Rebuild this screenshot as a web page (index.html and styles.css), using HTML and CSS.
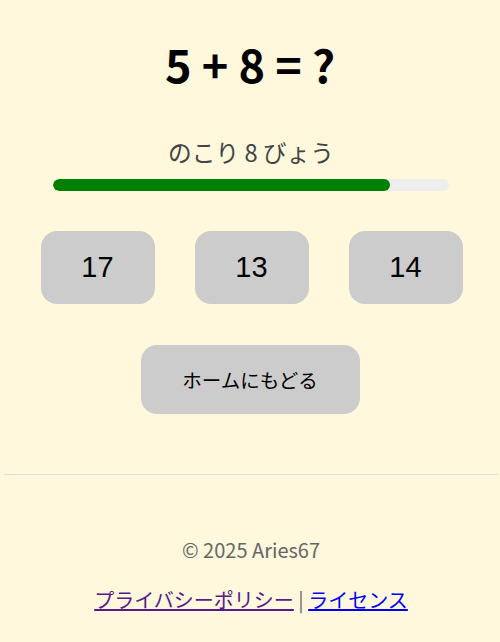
FILE: index.html
```html
<!DOCTYPE html>
<html lang="ja">
<head>
<meta charset="utf-8">
<title>けいさん</title>
<link rel="stylesheet" href="styles.css">
</head>
<body>
<main class="game">
  <h1 class="question">5 + 8 = ?</h1>
  <p class="timer">のこり 8 びょう</p>
  <div class="bar"><div class="bar-fill" style="width: 85%"></div></div>
  <div class="choices">
    <button class="choice">17</button>
    <button class="choice">13</button>
    <button class="choice">14</button>
  </div>
  <button class="home">ホームにもどる</button>
</main>
<footer class="footer">
  <p class="copy">© 2025 Aries67</p>
  <p class="links"><a class="visited" href="#privacy">プライバシーポリシー</a> | <a class="link" href="#license">ライセンス</a></p>
</footer>
</body>
</html>
```
FILE: styles.css
```css
html, body {
  margin: 0;
  padding: 0;
}
body {
  background: #fff8dc;
  font-family: "Noto Sans CJK JP", "Noto Sans", sans-serif;
  color: #000;
}
.game {
  display: flex;
  flex-direction: column;
  align-items: center;
  padding-top: 31px;
  padding-bottom: 60px;
}
.question {
  margin: 0;
  font-size: 45px;
  line-height: 65px;
  font-weight: bold;
}
.timer {
  margin: 39px 0 0 2px;
  font-size: 23.7px;
  line-height: 35px;
  color: #444;
}
.bar {
  margin-top: 9px;
  margin-left: 2px;
  width: 396px;
  height: 12px;
  background: #eeeeee;
  border-radius: 6px;
  overflow: hidden;
}
.bar-fill {
  height: 100%;
  background: #008000;
  border-radius: 6px;
}
.choices {
  display: flex;
  gap: 40px;
  margin-top: 40px;
  margin-left: 3px;
}
.choice {
  width: 114px;
  height: 73px;
  border: none;
  border-radius: 16px;
  background: #cccccc;
  color: #000;
  font-family: "Liberation Sans", Arial, sans-serif;
  font-size: 29px;
  padding: 0;
}
.home {
  margin-top: 41px;
  width: 219px;
  height: 69px;
  border: none;
  border-radius: 16px;
  background: #cccccc;
  color: #000;
  font-family: "Liberation Sans", "Noto Sans CJK JP", sans-serif;
  font-size: 19.5px;
  padding: 0;
}
.footer {
  margin: 0 2px 0 4px;
  border-top: 1px solid #ddd;
  text-align: center;
  color: #666;
  font-size: 20px;
  padding-top: 60px;
}
.copy {
  margin: 0;
  line-height: 29px;
}
.links {
  margin: 21px 0 0;
  line-height: 29px;
}
.visited {
  color: #551a8b;
}
.link {
  color: #0000ee;
}
```
